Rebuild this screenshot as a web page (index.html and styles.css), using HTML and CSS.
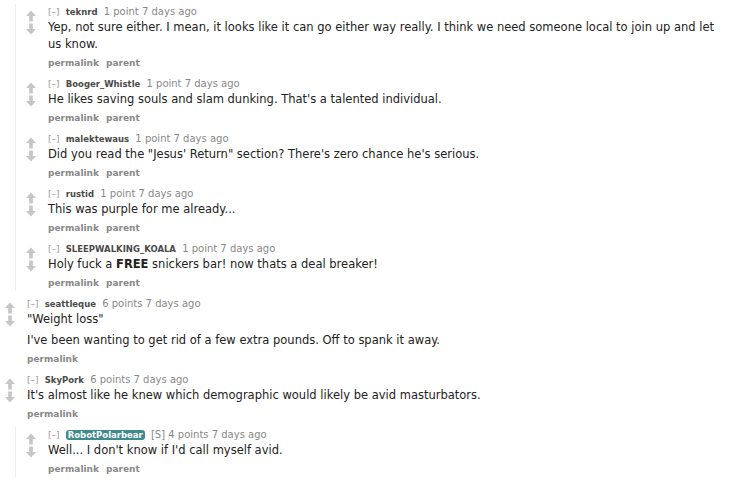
FILE: index.html
```html
<!DOCTYPE html>
<html>
<head>
    <link rel="stylesheet" href="styles.css">
</head>
<body>
    <div class="child">
        <div class="comment">
            <div class="midcol">
                <svg class="arrow" viewBox="0 0 11 12"><polygon points="5.5,0 11,6 7.5,6 7.5,12 3.5,12 3.5,6 0,6"/></svg>
                <svg class="arrow" viewBox="0 0 11 12"><polygon points="3.5,0 7.5,0 7.5,6 11,6 5.5,12 0,6 3.5,6"/></svg>
            </div>
            <div class="entry">
                <p class="tagline"><span class="expand">[&ndash;]</span> <span class="author">teknrd</span> <span class="score">1 point 7 days ago</span></p>
                <div class="md">
                    <p>Yep, not sure either. I mean, it looks like it can go either way really. I think we need someone local to join up and let us know.</p>
                </div>
                <ul class="buttons"><li>permalink</li><li>parent</li></ul>
            </div>
        </div>

        <div class="comment">
            <div class="midcol">
                <svg class="arrow" viewBox="0 0 11 12"><polygon points="5.5,0 11,6 7.5,6 7.5,12 3.5,12 3.5,6 0,6"/></svg>
                <svg class="arrow" viewBox="0 0 11 12"><polygon points="3.5,0 7.5,0 7.5,6 11,6 5.5,12 0,6 3.5,6"/></svg>
            </div>
            <div class="entry">
                <p class="tagline"><span class="expand">[&ndash;]</span> <span class="author">Booger_Whistle</span> <span class="score">1 point 7 days ago</span></p>
                <div class="md">
                    <p>He likes saving souls and slam dunking. That's a talented individual.</p>
                </div>
                <ul class="buttons"><li>permalink</li><li>parent</li></ul>
            </div>
        </div>

        <div class="comment">
            <div class="midcol">
                <svg class="arrow" viewBox="0 0 11 12"><polygon points="5.5,0 11,6 7.5,6 7.5,12 3.5,12 3.5,6 0,6"/></svg>
                <svg class="arrow" viewBox="0 0 11 12"><polygon points="3.5,0 7.5,0 7.5,6 11,6 5.5,12 0,6 3.5,6"/></svg>
            </div>
            <div class="entry">
                <p class="tagline"><span class="expand">[&ndash;]</span> <span class="author">malektewaus</span> <span class="score">1 point 7 days ago</span></p>
                <div class="md">
                    <p>Did you read the "Jesus' Return" section? There's zero chance he's serious.</p>
                </div>
                <ul class="buttons"><li>permalink</li><li>parent</li></ul>
            </div>
        </div>

        <div class="comment">
            <div class="midcol">
                <svg class="arrow" viewBox="0 0 11 12"><polygon points="5.5,0 11,6 7.5,6 7.5,12 3.5,12 3.5,6 0,6"/></svg>
                <svg class="arrow" viewBox="0 0 11 12"><polygon points="3.5,0 7.5,0 7.5,6 11,6 5.5,12 0,6 3.5,6"/></svg>
            </div>
            <div class="entry">
                <p class="tagline"><span class="expand">[&ndash;]</span> <span class="author">rustid</span> <span class="score">1 point 7 days ago</span></p>
                <div class="md">
                    <p>This was purple for me already...</p>
                </div>
                <ul class="buttons"><li>permalink</li><li>parent</li></ul>
            </div>
        </div>

        <div class="comment">
            <div class="midcol">
                <svg class="arrow" viewBox="0 0 11 12"><polygon points="5.5,0 11,6 7.5,6 7.5,12 3.5,12 3.5,6 0,6"/></svg>
                <svg class="arrow" viewBox="0 0 11 12"><polygon points="3.5,0 7.5,0 7.5,6 11,6 5.5,12 0,6 3.5,6"/></svg>
            </div>
            <div class="entry">
                <p class="tagline"><span class="expand">[&ndash;]</span> <span class="author">SLEEPWALKING_KOALA</span> <span class="score">1 point 7 days ago</span></p>
                <div class="md">
                    <p>Holy fuck a <strong>FREE</strong> snickers bar! now thats a deal breaker!</p>
                </div>
                <ul class="buttons"><li>permalink</li><li>parent</li></ul>
            </div>
        </div>
    </div>

    <div class="comment top">
        <div class="midcol">
            <svg class="arrow" viewBox="0 0 11 12"><polygon points="5.5,0 11,6 7.5,6 7.5,12 3.5,12 3.5,6 0,6"/></svg>
            <svg class="arrow" viewBox="0 0 11 12"><polygon points="3.5,0 7.5,0 7.5,6 11,6 5.5,12 0,6 3.5,6"/></svg>
        </div>
        <div class="entry">
            <p class="tagline"><span class="expand">[&ndash;]</span> <span class="author">seattleque</span> <span class="score">6 points 7 days ago</span></p>
            <div class="md">
                <p>"Weight loss"</p>
                <p>I've been wanting to get rid of a few extra pounds. Off to spank it away.</p>
            </div>
            <ul class="buttons"><li>permalink</li></ul>
        </div>
    </div>

    <div class="comment top">
        <div class="midcol">
            <svg class="arrow" viewBox="0 0 11 12"><polygon points="5.5,0 11,6 7.5,6 7.5,12 3.5,12 3.5,6 0,6"/></svg>
            <svg class="arrow" viewBox="0 0 11 12"><polygon points="3.5,0 7.5,0 7.5,6 11,6 5.5,12 0,6 3.5,6"/></svg>
        </div>
        <div class="entry">
            <p class="tagline"><span class="expand">[&ndash;]</span> <span class="author">SkyPork</span> <span class="score">6 points 7 days ago</span></p>
            <div class="md">
                <p>It's almost like he knew which demographic would likely be avid masturbators.</p>
            </div>
            <ul class="buttons"><li>permalink</li></ul>
        </div>
    </div>

    <div class="child nested">
        <div class="comment">
            <div class="midcol">
                <svg class="arrow" viewBox="0 0 11 12"><polygon points="5.5,0 11,6 7.5,6 7.5,12 3.5,12 3.5,6 0,6"/></svg>
                <svg class="arrow" viewBox="0 0 11 12"><polygon points="3.5,0 7.5,0 7.5,6 11,6 5.5,12 0,6 3.5,6"/></svg>
            </div>
            <div class="entry">
                <p class="tagline"><span class="expand">[&ndash;]</span> <span class="author submitter">RobotPolarbear</span> <span class="score">[S] 4 points 7 days ago</span></p>
                <div class="md">
                    <p>Well... I don't know if I'd call myself avid.</p>
                </div>
                <ul class="buttons"><li>permalink</li><li>parent</li></ul>
            </div>
        </div>
    </div>
</body>
</html>
```

FILE: styles.css
```css
body {
    margin: 0;
    padding: 4px 0 0 0;
    background: #fff;
    font-family: "DejaVu Sans", Verdana, sans-serif;
    color: #222;
}

.child {
    margin-left: 15px;
    border-left: 1px solid #eeeeee;
    padding-left: 5px;
}

.nested {
    margin-top: 2px;
}

.comment {
    display: flex;
    margin-bottom: 5px;
}

.midcol {
    width: 27px;
    flex-shrink: 0;
    display: flex;
    flex-direction: column;
    align-items: flex-start;
    padding: 6px 0 0 5px;
    box-sizing: border-box;
    gap: 1px;
}

.arrow {
    width: 10px;
    height: 12px;
    fill: #c6c6c6;
}

.entry {
    flex: 1;
    padding-right: 24px;
}

.tagline {
    margin: 0;
    height: 15px;
    font-size: 10px;
    line-height: 15px;
    color: #888;
    white-space: nowrap;
}

.tagline span {
    line-height: 1;
}

.expand {
    color: #999;
    font-size: 9px;
}

.author {
    color: #4a4a4a;
    font-weight: bold;
    font-size: 8.5px;
    margin: 0 3px;
}

.submitter {
    background: #3f8a8c;
    color: #fff;
    padding: 0 2px;
    border-radius: 3px;
}

.md {
    font-size: 11.5px;
    line-height: 17px;
}

.md p {
    margin: 0;
}

.md p + p {
    margin-top: 4px;
}

.buttons {
    list-style: none;
    margin: 3px 0 0 0;
    padding: 0;
    display: flex;
    gap: 7px;
    font-size: 9px;
    line-height: 15px;
    font-weight: bold;
    color: #888;
}
```
